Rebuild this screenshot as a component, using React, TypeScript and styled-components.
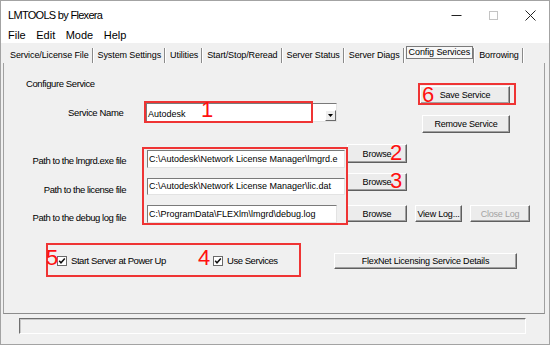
import React from 'react';
import styled, { createGlobalStyle } from 'styled-components';

const GlobalStyle = createGlobalStyle`
  html, body {
    margin: 0;
    padding: 0;
    background: #ffffff;
  }
`;

const tabs = [
  'Service/License File',
  'System Settings',
  'Utilities',
  'Start/Stop/Reread',
  'Server Status',
  'Server Diags',
  'Config Services',
  'Borrowing',
];

const MinimizeIcon = () => (
  <svg width="11" height="11" viewBox="0 0 11 11">
    <line x1="0.5" y1="5.5" x2="10.5" y2="5.5" stroke="#222" strokeWidth="1" />
  </svg>
);

const MaximizeIcon = () => (
  <svg width="11" height="11" viewBox="0 0 11 11">
    <rect x="1.5" y="1.5" width="8" height="8" fill="none" stroke="#c4c4c4" strokeWidth="1" />
  </svg>
);

const CloseIcon = () => (
  <svg width="11" height="11" viewBox="0 0 11 11">
    <path d="M0.5 0.5 L10.5 10.5 M10.5 0.5 L0.5 10.5" stroke="#222" strokeWidth="1" />
  </svg>
);

const CheckMark = () => (
  <svg width="10" height="10" viewBox="0 0 10 10">
    <rect x="0.5" y="0.5" width="9" height="9" fill="#fff" stroke="#6a6a6a" />
    <path d="M2.2 4.8 L4 6.8 L7.8 2.6" fill="none" stroke="#111" strokeWidth="1.5" />
  </svg>
);

export default function App() {
  return (
    <>
      <GlobalStyle />
      <Window>
        <TitleBar>
          <Title>LMTOOLS by Flexera</Title>
          <WinControls>
            <WinButton><MinimizeIcon /></WinButton>
            <WinButton><MaximizeIcon /></WinButton>
            <WinButton><CloseIcon /></WinButton>
          </WinControls>
        </TitleBar>

        <MenuBar>
          <MenuItem>File</MenuItem>
          <MenuItem>Edit</MenuItem>
          <MenuItem>Mode</MenuItem>
          <MenuItem>Help</MenuItem>
        </MenuBar>

        <TabStrip>
          {tabs.map((t) => (
            <TabItem key={t}>
              <TabLabel $active={t === 'Config Services'}>{t}</TabLabel>
            </TabItem>
          ))}
        </TabStrip>

        <Panel>
          <TopSection>
            <TopLeft>
              <SectionTitle>Configure Service</SectionTitle>
              <ServiceRow>
                <RowLabel>Service Name</RowLabel>
                <Combo>
                  <ComboText>Autodesk</ComboText>
                  <ComboArrow>
                    <svg width="5" height="3" viewBox="0 0 5 3">
                      <path d="M0 0 H5 L2.5 3 Z" fill="#000" />
                    </svg>
                  </ComboArrow>
                </Combo>
              </ServiceRow>
            </TopLeft>
            <TopRight>
              <Button $w={90} $h={18}>Save Service</Button>
              <Button $w={88} $h={18}>Remove Service</Button>
            </TopRight>
          </TopSection>

          <PathsSection>
            <PathRow $h={29}>
              <PathLabel $off={8}>Path to the lmgrd.exe file</PathLabel>
              <Field $w={198} $h={18} $off={6}>C:\Autodesk\Network License Manager\lmgrd.e</Field>
              <Button $w={60} $h={19} $ml={2}>Browse</Button>
            </PathRow>
            <PathRow $h={32}>
              <PathLabel $off={8}>Path to the license file</PathLabel>
              <Field $w={198} $h={17} $off={5}>C:\Autodesk\Network License Manager\lic.dat</Field>
              <Button $w={60} $h={18} $ml={2}>Browse</Button>
            </PathRow>
            <PathRow $h={18}>
              <PathLabel $off={4}>Path to the debug log file</PathLabel>
              <Field $w={190} $h={18} $off={0}>C:\ProgramData\FLEXlm\lmgrd\debug.log</Field>
              <Button $w={60} $h={17} $ml={10}>Browse</Button>
              <Button $w={47} $h={17} $ml={8}>View Log...</Button>
              <Button $w={60} $h={17} $ml={8} disabled>Close Log</Button>
            </PathRow>
          </PathsSection>

          <CheckRow>
            <CheckItem $w={156}>
              <CheckMark />
              <span>Start Server at Power Up</span>
            </CheckItem>
            <CheckItem $w={121}>
              <CheckMark />
              <span>Use Services</span>
            </CheckItem>
            <Button $w={183} $h={16}>FlexNet Licensing Service Details</Button>
          </CheckRow>
        </Panel>

        <StatusArea>
          <StatusBox />
        </StatusArea>

        <RedBox $x={143} $y={100} $w={169} $h={22} />
        <RedBox $x={417} $y={82} $w={98} $h={22} />
        <RedBox $x={141} $y={146} $w={206} $h={78} />
        <RedBox $x={45} $y={242} $w={255} $h={34} />

        <Marker $x={200} $y={98}>1</Marker>
        <Marker $x={421} $y={83}>6</Marker>
        <Marker $x={389} $y={141}>2</Marker>
        <Marker $x={389} $y={169}>3</Marker>
        <Marker $x={45} $y={246}>5</Marker>
        <Marker $x={197} $y={246}>4</Marker>
      </Window>
    </>
  );
}

const Window = styled.div`
  position: relative;
  width: 550px;
  height: 345px;
  box-sizing: border-box;
  border: 1px solid #a3a3a3;
  background: #f0f0f0;
  display: flex;
  flex-direction: column;
  overflow: hidden;
  font-family: "Liberation Sans", Arial, sans-serif;
  font-size: 9px;
  color: #000;
`;

const TitleBar = styled.div`
  height: 26px;
  flex-shrink: 0;
  background: #ffffff;
  display: flex;
  align-items: center;
  padding: 2px 0 0 7px;
  box-sizing: border-box;
`;

const Title = styled.div`
  font-size: 11px;
  letter-spacing: -0.7px;
`;

const WinControls = styled.div`
  margin-left: auto;
  display: flex;
  align-self: stretch;
`;

const WinButton = styled.div`
  width: 37px;
  display: flex;
  align-items: center;
  justify-content: center;
`;

const MenuBar = styled.div`
  height: 16px;
  flex-shrink: 0;
  background: #ffffff;
  display: flex;
  align-items: center;
  gap: 10.5px;
  padding-left: 7px;
`;

const MenuItem = styled.span`
  font-size: 11px;
`;

const TabStrip = styled.div`
  height: 20px;
  flex-shrink: 0;
  display: flex;
  align-items: flex-end;
  padding-left: 5px;
  box-sizing: border-box;
`;

const TabItem = styled.div`
  height: 15px;
  display: flex;
  align-items: center;
  padding: 0 3px 0 4px;
  border-right: 1px solid #8a8a8a;
  box-shadow: 1px 0 0 #ffffff;
  margin-right: 1px;
  white-space: nowrap;
  letter-spacing: -0.1px;
`;

const TabLabel = styled.span<{ $active?: boolean }>`
  line-height: 11px;
  padding: ${({ $active }) => ($active ? '0 2px' : '0')};
  margin: ${({ $active }) => ($active ? '-6px -3px 0 -3px' : '0')};
  border: ${({ $active }) => ($active ? '1px solid #7a7a7a' : 'none')};
  background: ${({ $active }) => ($active ? '#f7f7f7' : 'transparent')};
`;

const Panel = styled.div`
  height: 251px;
  width: 542px;
  margin-left: 2px;
  flex-shrink: 0;
  box-sizing: border-box;
  border-left: 1px solid #a0a0a0;
  border-right: 1px solid #a0a0a0;
  border-bottom: 1px solid #8c8c8c;
  display: flex;
  flex-direction: column;
`;

const TopSection = styled.div`
  display: flex;
  height: 70px;
`;

const TopLeft = styled.div`
  flex: 1;
  padding-top: 15px;
`;

const SectionTitle = styled.div`
  padding-left: 22px;
  line-height: 12px;
  font-size: 9.5px;
  letter-spacing: -0.4px;
`;

const ServiceRow = styled.div`
  margin-top: 13px;
  height: 19px;
  display: flex;
  align-items: center;
  padding-left: 64px;
`;

const RowLabel = styled.div`
  width: 78px;
  font-size: 9.5px;
  letter-spacing: -0.35px;
`;

const Combo = styled.div`
  width: 191px;
  height: 19px;
  box-sizing: border-box;
  display: flex;
  background: #ffffff;
  border-top: 1px solid #7a7a7a;
  border-left: 1px solid #7a7a7a;
  border-right: 1px solid #e3e3e3;
  border-bottom: 1px solid #e3e3e3;
`;

const ComboText = styled.div`
  flex: 1;
  padding: 3px 0 0 1px;
  line-height: 14px;
`;

const ComboArrow = styled.div`
  align-self: flex-end;
  width: 11px;
  height: 11px;
  box-sizing: border-box;
  background: #eeeeee;
  border-top: 1px solid #ffffff;
  border-left: 1px solid #ffffff;
  border-right: 1px solid #6a6a6a;
  border-bottom: 1px solid #6a6a6a;
  display: flex;
  align-items: center;
  justify-content: center;
`;

const TopRight = styled.div`
  display: flex;
  flex-direction: column;
  align-items: flex-end;
  gap: 11px;
  padding: 23px 34px 0 0;
`;

const Button = styled.button<{ $w: number; $h: number; $ml?: number }>`
  width: ${({ $w }) => $w}px;
  height: ${({ $h }) => $h}px;
  margin-left: ${({ $ml }) => $ml ?? 0}px;
  flex-shrink: 0;
  padding: 0;
  box-sizing: border-box;
  font-family: inherit;
  font-size: 9px;
  letter-spacing: -0.2px;
  color: #000;
  background: #ececec;
  border-top: 1px solid #ffffff;
  border-left: 1px solid #ffffff;
  border-right: 1px solid #5f5f5f;
  border-bottom: 1px solid #5f5f5f;
  box-shadow: inset -1px -1px 0 #a0a0a0;
  white-space: nowrap;

  &:disabled {
    color: #a3a3a3;
  }
`;

const PathsSection = styled.div`
  margin-top: 11px;
  display: flex;
  flex-direction: column;
`;

const PathRow = styled.div<{ $h: number }>`
  height: ${({ $h }) => $h}px;
  display: flex;
  align-items: flex-start;
`;

const PathLabel = styled.div<{ $off: number }>`
  width: 122px;
  text-align: right;
  line-height: 18px;
  font-size: 9.5px;
  letter-spacing: -0.45px;
  margin-top: ${({ $off }) => $off}px;
`;

const Field = styled.div<{ $w: number; $h: number; $off: number }>`
  width: ${({ $w }) => $w}px;
  height: ${({ $h }) => $h}px;
  margin: ${({ $off }) => $off}px 0 0 21px;
  box-sizing: border-box;
  background: #ffffff;
  border-top: 1px solid #7a7a7a;
  border-left: 1px solid #7a7a7a;
  border-right: 1px solid #e3e3e3;
  border-bottom: 1px solid #e3e3e3;
  padding-left: 1px;
  line-height: ${({ $h }) => $h - 2}px;
  white-space: nowrap;
  overflow: hidden;
`;

const CheckRow = styled.div`
  margin-top: 29px;
  height: 17px;
  display: flex;
  align-items: center;
  padding-left: 53px;
`;

const CheckItem = styled.div<{ $w: number }>`
  width: ${({ $w }) => $w}px;
  display: flex;
  align-items: center;
  gap: 4px;
  font-size: 9.5px;
  letter-spacing: -0.45px;
`;

const StatusArea = styled.div`
  flex: 1;
  padding: 4px 0 0 18px;
`;

const StatusBox = styled.div`
  width: 507px;
  height: 16px;
  box-sizing: border-box;
  border-top: 1px solid #6f6f6f;
  border-left: 1px solid #6f6f6f;
  border-right: 1px solid #ffffff;
  border-bottom: 1px solid #ffffff;
  box-shadow: inset 1px 1px 0 #c8c8c8;
`;

// annotation overlays drawn over the dialog
const RedBox = styled.div<{ $x: number; $y: number; $w: number; $h: number }>`
  position: absolute;
  left: ${({ $x }) => $x}px;
  top: ${({ $y }) => $y}px;
  width: ${({ $w }) => $w}px;
  height: ${({ $h }) => $h}px;
  box-sizing: border-box;
  border: 2px solid #ef3434;
  pointer-events: none;
`;

const Marker = styled.div<{ $x: number; $y: number }>`
  position: absolute;
  left: ${({ $x }) => $x}px;
  top: ${({ $y }) => $y}px;
  font-size: 22px;
  line-height: 1;
  color: #ff1010;
  pointer-events: none;
`;
